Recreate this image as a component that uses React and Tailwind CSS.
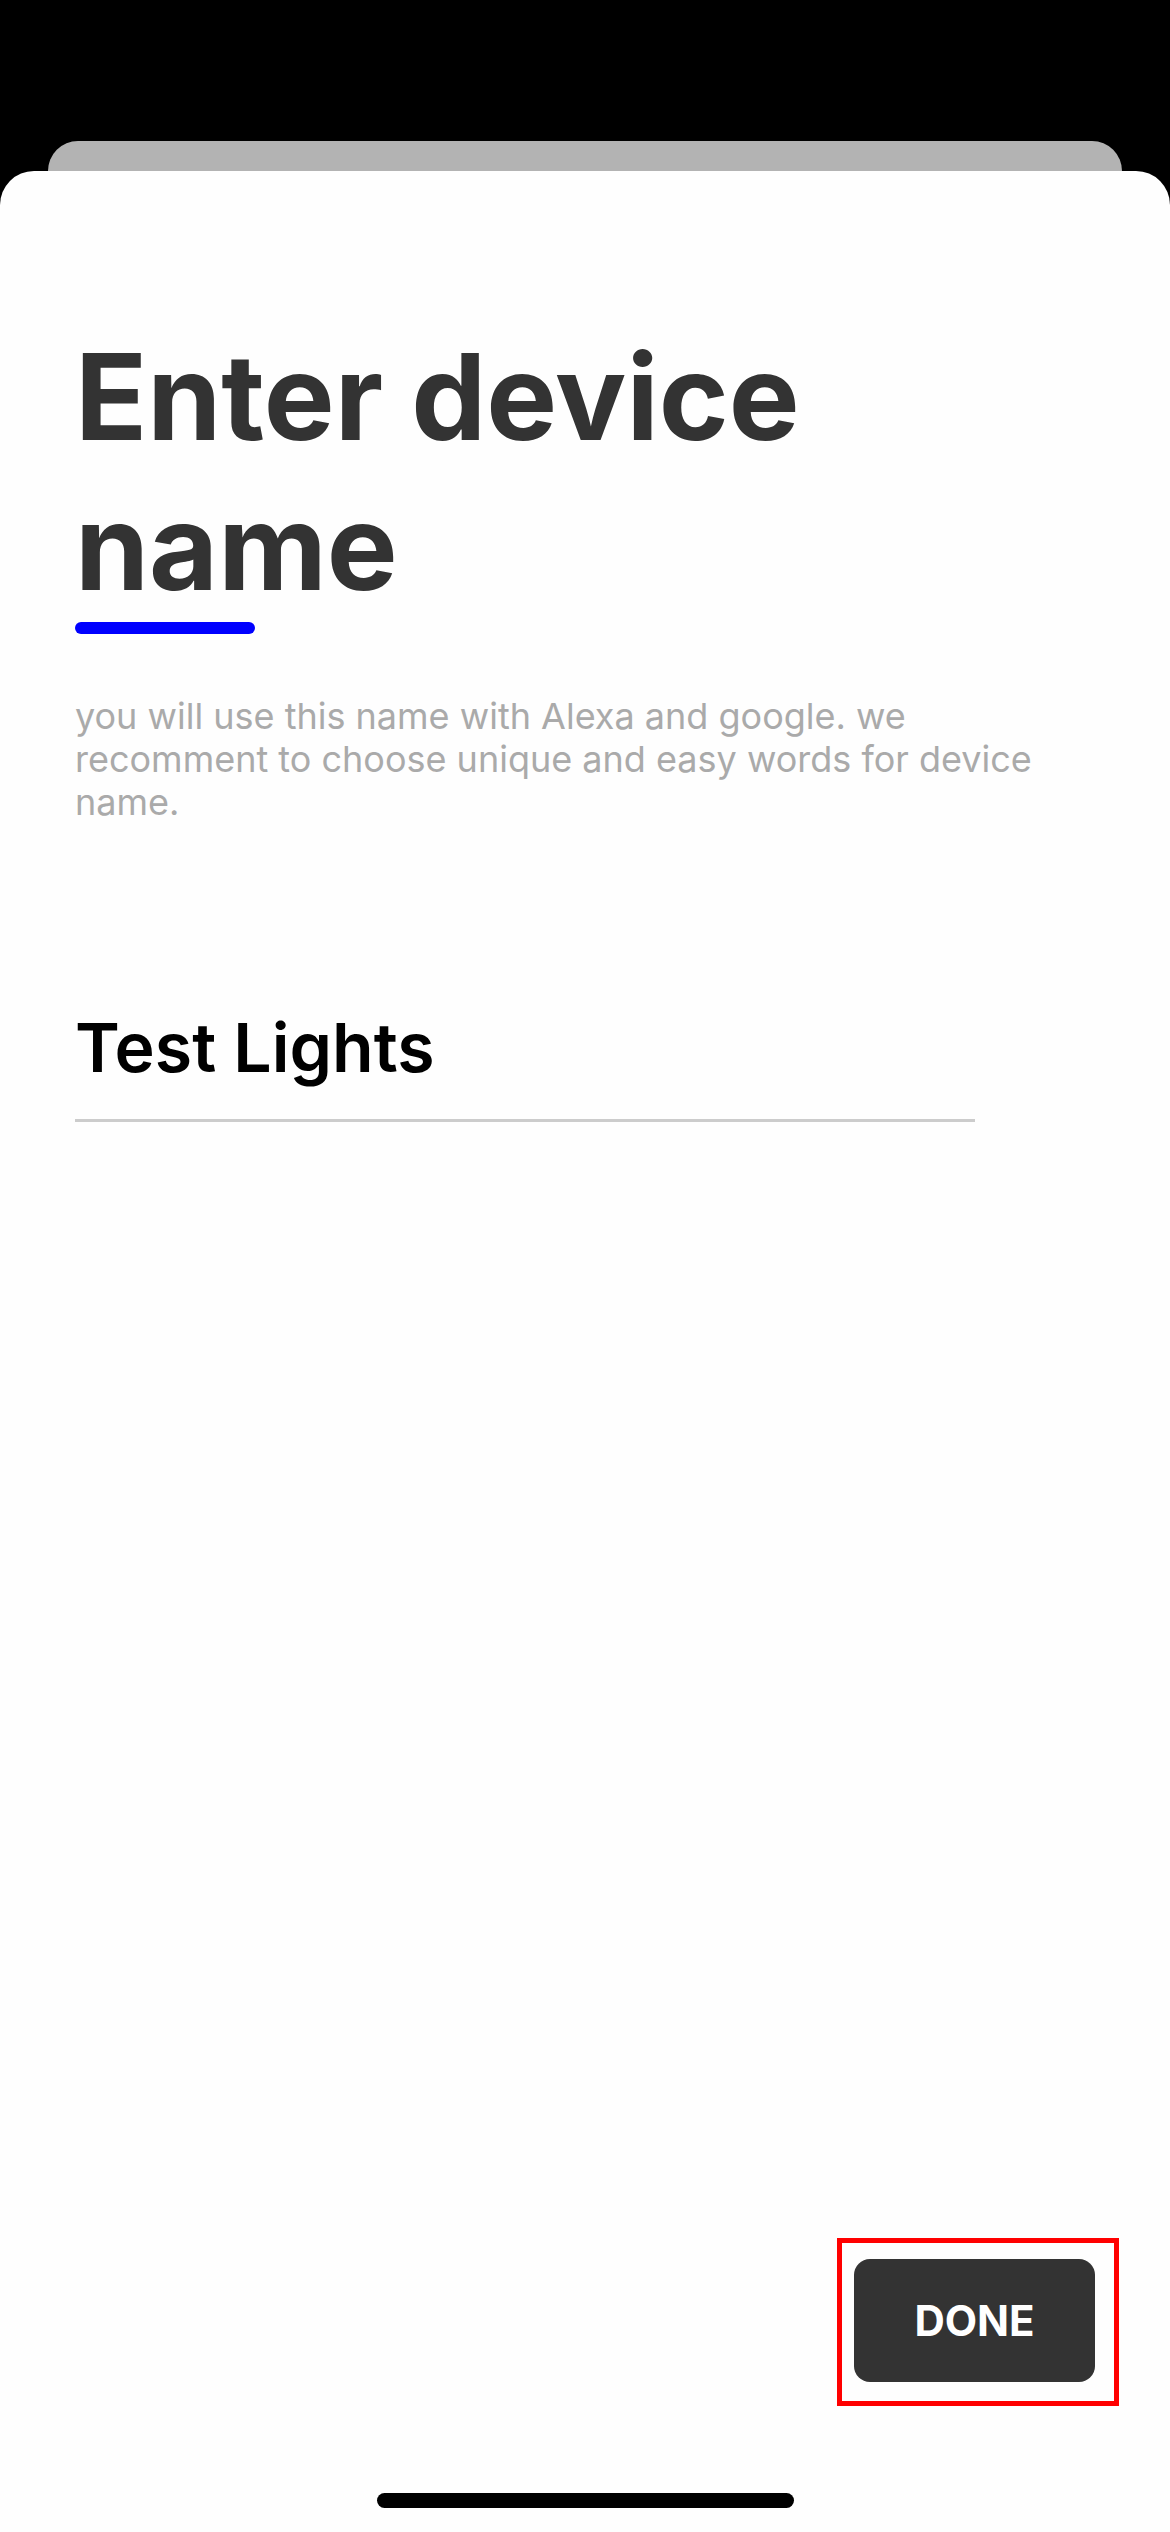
export default function App() {
  return (
    <div className="flex min-h-screen flex-col bg-black pt-[141px] font-['Inter',sans-serif]">
      <div className="mx-12 h-[30px] rounded-t-[30px] bg-[#b3b3b3]" />
      <main className="flex grow flex-col rounded-t-[34px] bg-[#fefefe] px-[75px] pt-[151px]">
        <h1 className="max-w-[840px] text-[119px] leading-[150px] font-bold text-[#333333]">Enter device name</h1>
        <div className="h-3 w-[180px] rounded-full bg-[#0000ff]" />
        <p className="mt-[61px] max-w-[960px] text-[36px] leading-[43px] text-[#aaaaaa]">
          you will use this name with Alexa and google. we recomment to choose unique and easy words for device name.
        </p>
        <input
          aria-label="Device name"
          defaultValue="Test Lights"
          className="mt-[158px] h-[140px] w-[900px] max-w-full border-b-3 border-[#cccccc] pb-2 text-[68px] font-semibold text-black outline-none"
        />
        <div className="mt-auto -mr-6 self-end border-5 border-[#ff0000] pt-4 pr-[19px] pb-[19px] pl-3">
          <button type="button" className="block h-[123px] w-[241px] rounded-2xl bg-[#333333] text-[42px] font-bold text-white">
            DONE
          </button>
        </div>
        <div className="mt-[87px] mb-6 h-[15px] w-[417px] self-center rounded-full bg-black" />
      </main>
    </div>
  );
}
